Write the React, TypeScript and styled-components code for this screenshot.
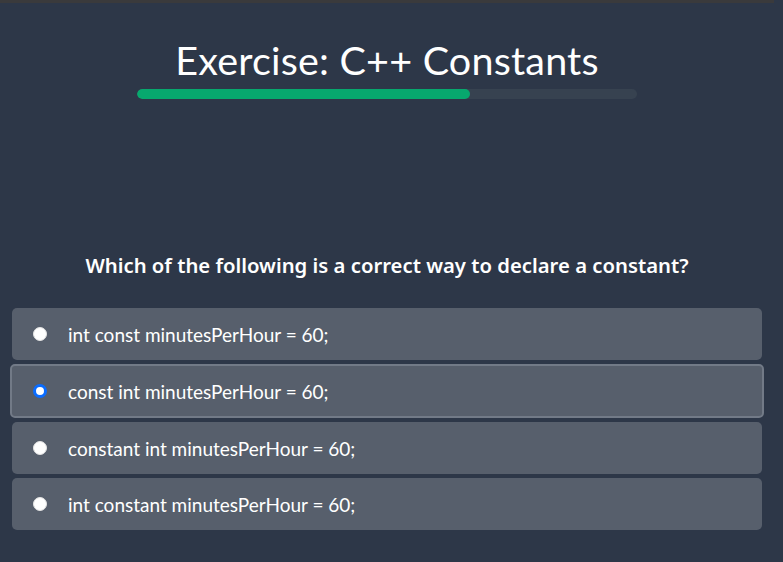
import { useState } from 'react';
import styled, { createGlobalStyle } from 'styled-components';

const GlobalStyle = createGlobalStyle`
  html, body {
    margin: 0;
    padding: 0;
    background: #2d3748;
  }
  * {
    box-sizing: border-box;
  }
`;

const Page = styled.div`
  width: 774px;
  height: 562px;
  background: #2d3748;
  border-top: 3px solid #3a3a3c;
  display: flex;
  flex-direction: column;
  align-items: center;
  font-family: 'Lato', 'Open Sans', sans-serif;
  color: #ffffff;
`;

const Title = styled.h1`
  margin: 34px 0 0;
  font-size: 39.5px;
  line-height: 46px;
  font-weight: 400;
  letter-spacing: 0.2px;
`;

const Track = styled.div`
  width: 500px;
  height: 10px;
  margin-top: 6px;
  border-radius: 5px;
  background: #374250;
  overflow: hidden;
`;

const Fill = styled.div`
  height: 100%;
  border-radius: 5px;
  background: #07a86e;
`;

const Question = styled.h2`
  margin: 153px 0 0;
  font-family: 'Noto Sans', 'Open Sans', sans-serif;
  font-size: 20.3px;
  line-height: 26px;
  font-weight: 600;
`;

const Options = styled.div`
  width: 100%;
  padding: 0 12px;
  margin-top: 30px;
  display: flex;
  flex-direction: column;
  gap: 4px;
`;

const Option = styled.label<{ $selected: boolean }>`
  display: flex;
  align-items: center;
  gap: 21px;
  height: 52px;
  padding: 0 21px;
  border-radius: 5px;
  background: #575f6c;
  font-size: 19px;
  cursor: pointer;
  ${({ $selected }) =>
    $selected &&
    `
    margin: 0 -2px;
    height: 54px;
    padding: 0 21px 0 21px;
    border: 2px solid #727a87;
  `}
`;

const Radio = styled.span<{ $selected: boolean }>`
  width: 14px;
  height: 14px;
  border-radius: 50%;
  background: #ffffff;
  flex-shrink: 0;
  border: ${({ $selected }) => ($selected ? '3px solid #0a6cff' : '1px solid #e4e4e4')};
`;

const answers = [
  'int const minutesPerHour = 60;',
  'const int minutesPerHour = 60;',
  'constant int minutesPerHour = 60;',
  'int constant minutesPerHour = 60;',
];

export default function App() {
  const [picked, setPicked] = useState(1);
  const progress = 2 / 3;

  return (
    <Page>
      <GlobalStyle />
      <Title>Exercise: C++ Constants</Title>
      <Track>
        <Fill style={{ width: `${progress * 100}%` }} />
      </Track>
      <Question>Which of the following is a correct way to declare a constant?</Question>
      <Options>
        {answers.map((a, i) => (
          <Option key={a} $selected={picked === i} onClick={() => setPicked(i)}>
            <Radio $selected={picked === i} />
            {a}
          </Option>
        ))}
      </Options>
    </Page>
  );
}
